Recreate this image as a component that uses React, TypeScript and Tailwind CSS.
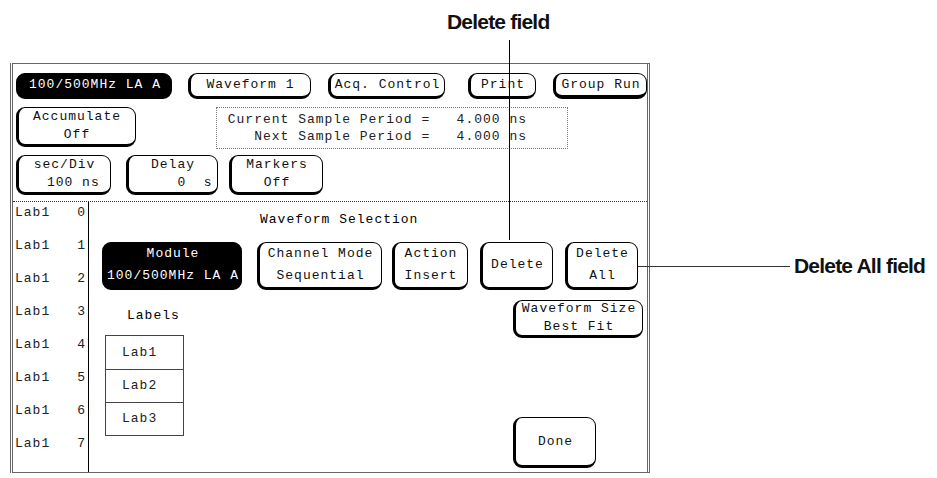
import type { ReactNode } from "react";

const MONO = "font-['Liberation_Mono','DejaVu_Sans_Mono',monospace] text-[13px] tracking-[1px]";

function Key({
  lines,
  className,
  dark = false,
}: {
  lines: ReactNode[];
  className: string;
  dark?: boolean;
}) {
  return (
    <div
      className={`flex shrink-0 flex-col items-center justify-center rounded-[9px] border border-b-[3px] border-l-[3px] border-black leading-[18px] ${
        dark ? "bg-black text-white" : "bg-white text-[#111]"
      } ${className}`}
    >
      {lines.map((l, i) => (
        <span key={i} className="whitespace-pre">
          {l}
        </span>
      ))}
    </div>
  );
}

const LAB_ROWS = [0, 1, 2, 3, 4, 5, 6, 7];

export default function App() {
  return (
    <div className="relative h-[478px] w-[937px] overflow-hidden bg-white text-black">
      {/* callout: Delete field */}
      <div className="flex h-[63px] items-start">
        <p className="ml-[447px] mt-[6px] font-['Liberation_Sans',Arial,sans-serif] text-[21px] font-bold tracking-[-0.8px] text-[#111]">
          Delete field
        </p>
      </div>

      <div className="flex items-start">
        {/* instrument screen */}
        <div
          className={`ml-[10px] flex h-[410px] w-[640px] flex-col border border-l-[3px] border-r-[3px] border-double border-[#666] ${MONO}`}
        >
          {/* row 1 */}
          <div className="flex items-center pl-[3px] pt-[9px]">
            <Key dark lines={["100/500MHz LA A"]} className="h-[26px] w-[156px]" />
            <Key lines={["Waveform 1"]} className="ml-[16px] h-[26px] w-[123px]" />
            <Key lines={["Acq. Control"]} className="ml-[17px] h-[26px] w-[117px]" />
            <Key lines={["Print"]} className="ml-[23px] h-[26px] w-[68px]" />
            <Key lines={["Group Run"]} className="ml-[17px] h-[26px] w-[94px] border-b-[4px]" />
          </div>

          {/* row 2 */}
          <div className="flex items-start pl-[3px] pt-[8px]">
            <Key lines={["Accumulate", "Off"]} className="h-[40px] w-[120px]" />
            <div className="ml-[80px] flex h-[42px] w-[352px] flex-col items-end justify-center border border-dotted border-[#777] pr-[40px] leading-[17px] text-[#222]">
              <span className="whitespace-pre">Current Sample Period =   4.000 ns</span>
              <span className="whitespace-pre">Next Sample Period =   4.000 ns</span>
            </div>
          </div>

          {/* row 3 */}
          <div className="flex items-start pl-[3px] pt-[6px]">
            <Key lines={["sec/Div", "  100 ns"]} className="h-[40px] w-[95px]" />
            <Key lines={["Delay", "     0  s"]} className="ml-[15px] h-[40px] w-[92px]" />
            <Key lines={["Markers", "Off"]} className="ml-[11px] h-[40px] w-[94px]" />
          </div>

          {/* lower area */}
          <div className="mt-[6px] flex flex-1 border-t border-dotted border-[#333]">
            <div className="flex w-[76px] flex-col border-r border-black">
              {LAB_ROWS.map((n) => (
                <div key={n} className="flex h-[33px] items-start justify-between px-[2px] pt-[2px] leading-[18px] text-[#222]">
                  <span>Lab1</span>
                  <span>{n}</span>
                </div>
              ))}
            </div>

            <div className="flex flex-1 flex-col pl-[13px]">
              <p className="ml-[158px] mt-[9px] leading-[18px]">Waveform Selection</p>

              <div className="mt-[13px] flex items-start">
                <Key dark lines={["Module", "100/500MHz LA A"]} className="h-[48px] w-[140px] leading-[22px]" />
                <Key lines={["Channel Mode", "Sequential"]} className="ml-[15px] h-[48px] w-[125px] leading-[22px]" />
                <Key lines={["Action", "Insert"]} className="ml-[10px] h-[48px] w-[76px] leading-[22px]" />
                <Key lines={["Delete"]} className="ml-[12px] h-[48px] w-[73px]" />
                <Key lines={["Delete", "All"]} className="ml-[12px] h-[48px] w-[73px] leading-[22px]" />
              </div>

              <div className="flex flex-1">
                <div className="ml-[3px] flex flex-col">
                  <p className="ml-[22px] mt-[17px] leading-[18px]">Labels</p>
                  <div className="mt-[10px] flex w-[79px] flex-col border border-[#444]">
                    {["Lab1", "Lab2", "Lab3"].map((l, i) => (
                      <div
                        key={l}
                        className={`flex h-[33px] items-center pl-[16px] text-[#222] ${
                          i > 0 ? "border-t border-[#444]" : ""
                        }`}
                      >
                        {l}
                      </div>
                    ))}
                  </div>
                </div>

                <div className="ml-auto mr-[4px] flex flex-col items-end">
                  <Key lines={["Waveform Size", "Best Fit"]} className="mt-[10px] h-[38px] w-[130px]" />
                  <Key lines={["Done"]} className="mr-[47px] mt-[79px] h-[51px] w-[83px]" />
                </div>
              </div>
            </div>
          </div>
        </div>

        {/* callout: Delete All field */}
        <p className="ml-[144px] mt-[187px] font-['Liberation_Sans',Arial,sans-serif] text-[21px] font-bold tracking-[-0.8px] text-[#111]">
          Delete All field
        </p>
      </div>

      {/* leader lines */}
      <div className="absolute left-[509px] top-[40px] h-[200px] w-px bg-black" />
      <div className="absolute left-[638px] top-[266px] h-px w-[152px] bg-[#333]" />
    </div>
  );
}
